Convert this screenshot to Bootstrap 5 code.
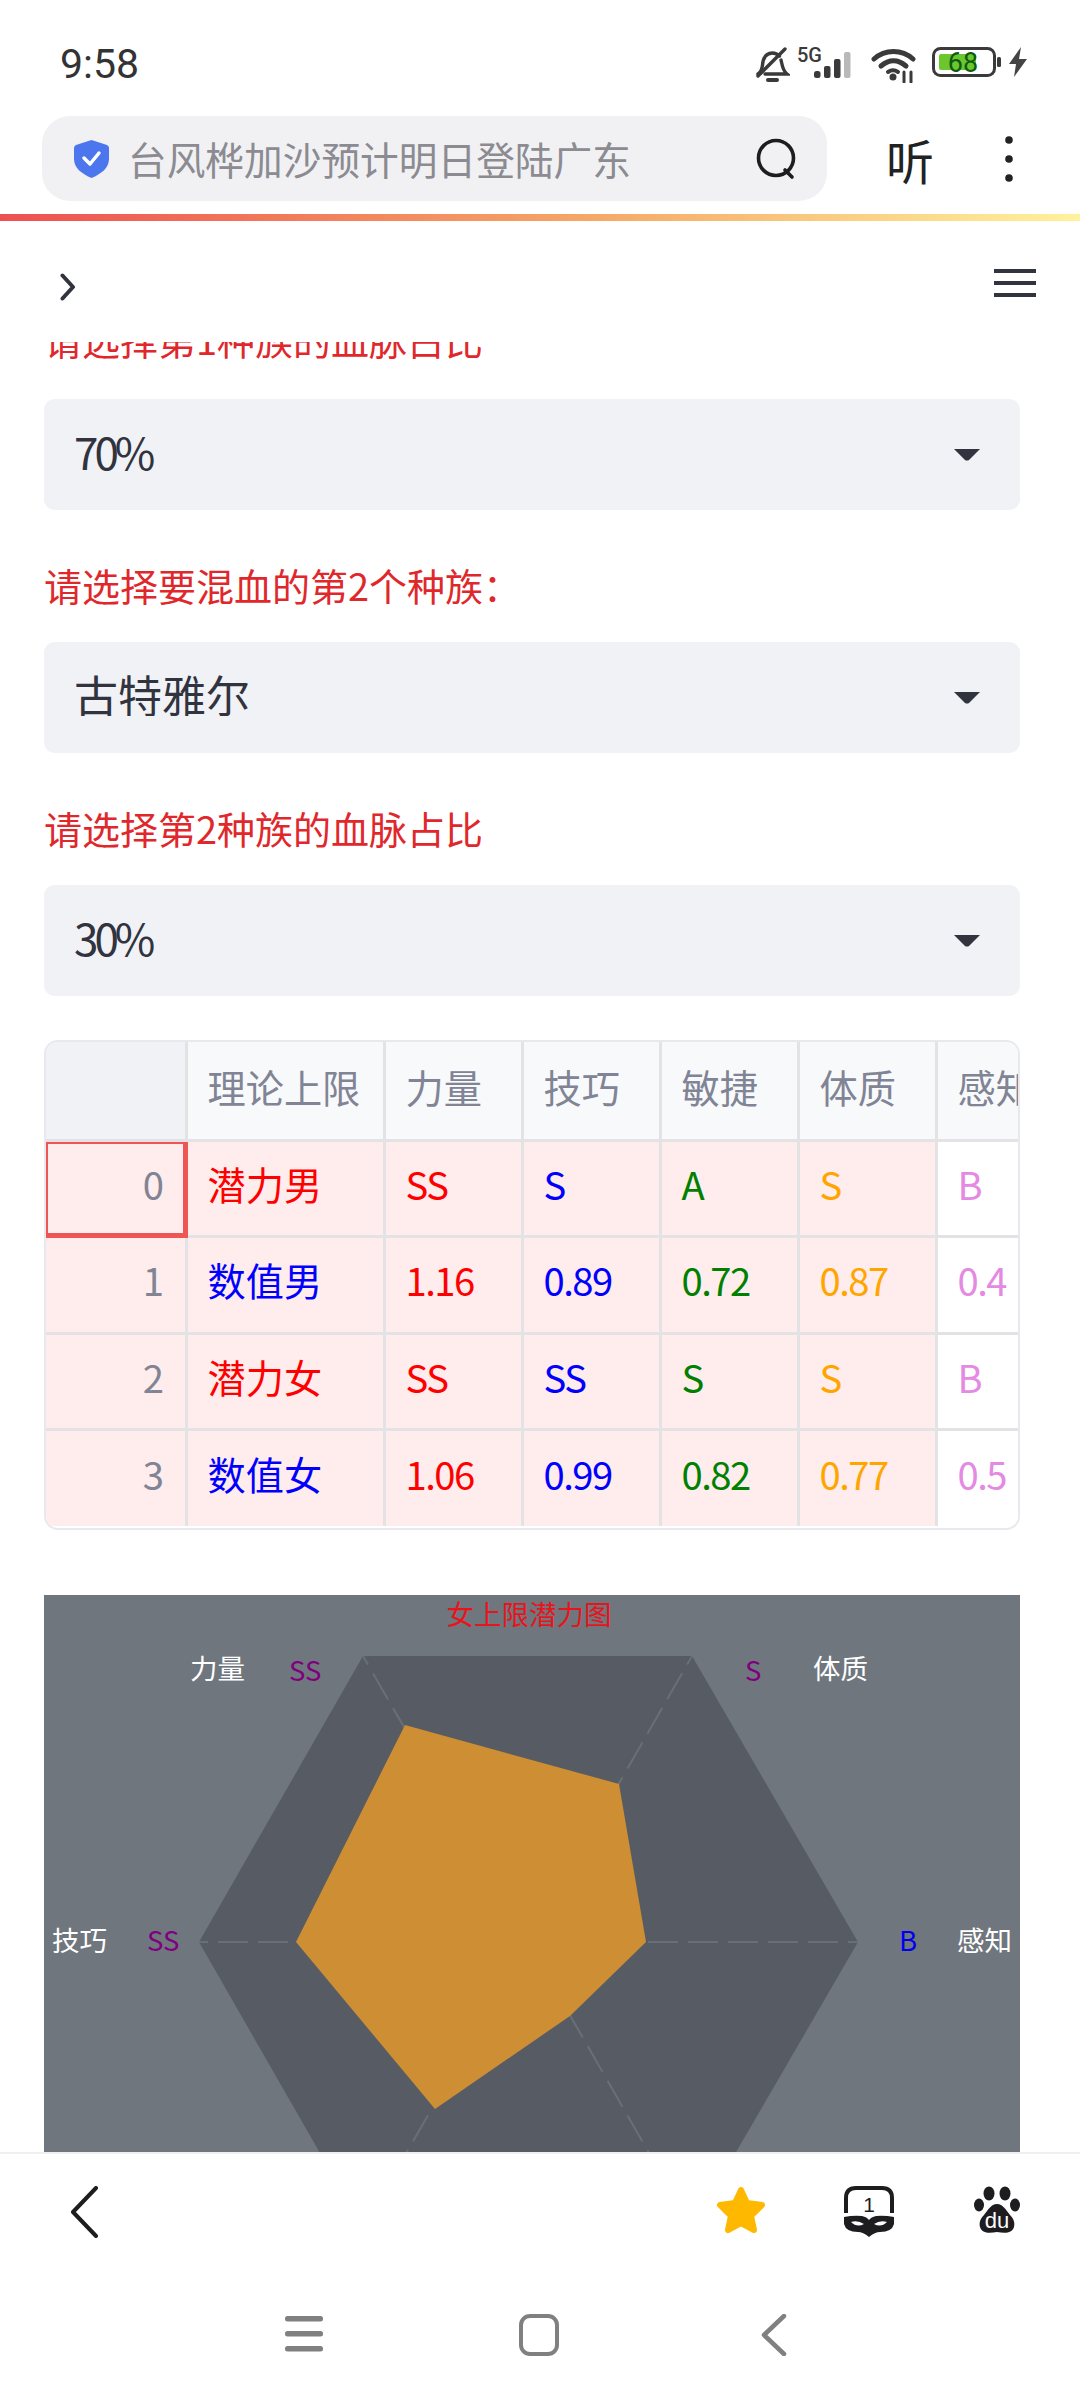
<!DOCTYPE html>
<html lang="zh-CN">
<head>
  <meta charset="UTF-8" />
  <meta name="viewport" content="width=device-width, initial-scale=1" />
  <title>血脉混血</title>
  <link href="https://cdn.jsdelivr.net/npm/bootstrap@5.3.0/dist/css/bootstrap.min.css" rel="stylesheet" />
  <style>
    html, body { height: 2400px; }
    body {
      width: 1080px;
      overflow: hidden;
      font-family: "Noto Sans CJK SC", "Liberation Sans", sans-serif;
      color: #31333f;
      background: #fff;
    }
    /* phone status bar */
    .status-row { height: 100px; padding: 47px 53px 0 60px; flex: none; }
    .clock { font-family: Roboto, sans-serif; font-size: 41px; line-height: 34px; color: #333; }
    .ic-signal { margin-left: 7px; }
    .ic-wifi { margin-left: 14px; }
    .ic-batt { margin-left: 16px; }
    .ic-bolt { margin-left: 7px; }

    /* browser address row */
    .addr-row { height: 114px; padding: 16px 0 13px 42px; flex: none; }
    .addr-box {
      width: 785px;
      height: 85px;
      background: #f1f1f4;
      border-radius: 28px;
      padding: 0 29px 0 32px;
    }
    .addr-text { font-size: 38.7px; line-height: 1; color: #8b8b91; margin-left: 19px; white-space: nowrap; }
    .listen { font-size: 48px; font-weight: 400; line-height: 1; color: #222; margin-left: 59px; }
    .more-dots { margin-left: 70px; }
    .load-bar { height: 7px; flex: none; background: linear-gradient(90deg, #ee5050, #f5a868 55%, #fff29c); }

    /* page area */
    .page-area { flex: 1 1 auto; min-height: 0; overflow: hidden; }
    .page-head { height: 121px; padding: 48px 44px 0 60px; }
    .page-body { width: 976px; margin-left: 44px; }
    .field-label { font-size: 38px; line-height: 54px; color: #e0282c; margin: 48px 0 30px; }
    .cut-label { height: 57px; overflow: hidden; }
    .cut-label .field-label { margin: -30px 0 0; }
    .pick {
      height: 111px;
      font-size: 44px;
      line-height: 1;
      color: #31333f;
      background-color: #f0f2f6;
      background-image: url("data:image/svg+xml,%3Csvg xmlns='http://www.w3.org/2000/svg' viewBox='0 0 26 12'%3E%3Cpath d='M0 0h26L15 11q-2 1-4 0z' fill='%2331333f'/%3E%3C/svg%3E");
      background-position: right 40px center;
      background-size: 26px 12px;
      border: 0;
      border-radius: 11px;
      padding: 0 80px 8px 30px;
    }
    .pick-num { letter-spacing: -4px; }

    .table-frame { margin-top: 44px; height: 490px; border: 2px solid #e8e9ee; border-radius: 14px; overflow: hidden; }
    .stat-table { table-layout: fixed; width: 1012px; margin: 0; border-collapse: collapse; font-size: 38.2px; line-height: 1; }
    .stat-table th, .stat-table td {
      height: 96.5px;
      padding: 0 0 9px 20px;
      vertical-align: middle;
      font-weight: 400;
      border: 0;
      border-right: 3px solid #e3e3e6;
      border-bottom: 3px solid #e3e3e6;
      box-shadow: none;
      white-space: nowrap;
      overflow: hidden;
    }
    .stat-table thead th { height: 98px; background: #f8f9fb; color: #808495; padding-bottom: 7px; }
    .stat-table thead th:first-child { background: #f0f2f6; }
    .stat-table td { background: #ffecec; letter-spacing: -1.5px; }
    .stat-table td.name-cell { letter-spacing: 0; }
    .stat-table td.plain-cell { background: #fff; border-right: 0; }
    .stat-table thead th:last-child { border-right: 0; }
    .stat-table td.row-idx { text-align: right; padding: 0 22px 9px 0; color: #808495; }
    .stat-table td.row-focus { box-shadow: inset 0 0 0 2px #ee5555; border-right-color: #ee5555; border-bottom-color: #ee5555; }
    .stat-table tbody tr:last-child td { border-bottom: 0; }
    .stat-table td.c-red { color: #f00; }
    .stat-table td.c-blue { color: #00f; }
    .stat-table td.c-green { color: #008000; }
    .stat-table td.c-orange { color: #ffa500; }
    .stat-table td.c-violet { color: #e58ae2; }

    .radar-wrap { margin-top: 65px; }
    .radar-wrap svg { display: block; }
    .radar-wrap text { font-family: "Noto Sans CJK SC", sans-serif; font-size: 27.5px; }

    /* browser + phone bottom bars */
    .bottom-wrap { height: 248px; flex: none; background: #fff; border-top: 2px solid #efefef; }
    .tool-row { height: 150px; padding: 32px 60px 0 70px; }
    .tool-gap { margin-left: 78px; }
    .tool-gap2 { margin-left: 80px; }
    .nav-row { padding-left: 285px; padding-top: 10px; }
    .nav-home { margin-left: 196px; }
    .nav-back { margin-left: 202px; }
  </style>
</head>
<body>
  <div class="d-flex flex-column h-100">

    <!-- status bar -->
    <div class="status-row d-flex justify-content-between align-items-start">
      <div class="clock">9:58</div>
      <div class="d-flex align-items-start">
        <svg width="35" height="37" viewBox="0 0 35 37" fill="none" stroke="#3a3a3a" stroke-width="3.4" stroke-linecap="round">
          <path d="M3 27c3-2 4-4 4.500-9 .5-6 3-12 10-12 3 0 5 1 7 3M26 13c1 3 1 10 6 14H10"/>
          <path d="M30 2 3 29"/>
          <path d="M13 33h9" stroke-width="4"/>
        </svg>
        <svg class="ic-signal" width="60" height="32" viewBox="0 0 60 32">
          <text x="0" y="15" font-family="Roboto, sans-serif" font-size="20" font-weight="500" fill="#3a3a3a">5G</text>
          <rect x="17" y="24" width="6.500" height="7" rx="2.500" fill="#3a3a3a"/>
          <rect x="27" y="19" width="6.500" height="12" rx="2" fill="#3a3a3a"/>
          <rect x="37" y="12" width="6.500" height="19" rx="2" fill="#3a3a3a"/>
          <rect x="47" y="5" width="6.500" height="26" rx="2" fill="#b9b9b9"/>
        </svg>
        <svg class="ic-wifi" width="45" height="36" viewBox="0 0 45 36" fill="none" stroke="#3a3a3a" stroke-width="5" stroke-linecap="round">
          <path d="M3 12c11-10 28-10 39 0"/>
          <path d="M10 19c8-7 17-7 25 0"/>
          <path d="M17 25c3-2 7-2 10 0" stroke-width="4"/>
          <circle cx="22" cy="30" r="3.500" fill="#3a3a3a" stroke="none"/>
          <path d="M33 25v10M40 25v10" stroke-width="3"/>
        </svg>
        <svg class="ic-batt" width="70" height="32" viewBox="0 0 70 32">
          <rect x="1.500" y="1.500" width="61" height="27" rx="7" fill="none" stroke="#3a3a3a" stroke-width="3"/>
          <rect x="7" y="7" width="37" height="16" rx="2" fill="#6cc62e"/>
          <rect x="65" y="10" width="4" height="10" rx="1.500" fill="#3a3a3a"/>
          <text x="31" y="25" text-anchor="middle" font-family="Roboto, sans-serif" font-size="27" fill="#0e5a12">68</text>
        </svg>
        <svg class="ic-bolt" width="18" height="30" viewBox="0 0 18 30">
          <path d="M12 0 0 17h7L5 30l13-18h-8z" fill="#444"/>
        </svg>
      </div>
    </div>

    <!-- address row -->
    <div class="addr-row d-flex align-items-center">
      <div class="addr-box d-flex align-items-center">
        <svg width="35" height="38" viewBox="0 0 35 38">
          <path d="M17.500 0 33 5q2 1 2 3v11c0 9-8 15-17.500 19C8 34 0 28 0 19V8q0-2 2-3z" fill="#4c76ee"/>
          <path d="M10 18l6 6 9-11" fill="none" stroke="#fff" stroke-width="3.500" stroke-linecap="round" stroke-linejoin="round"/>
        </svg>
        <span class="addr-text">台风桦加沙预计明日登陆广东</span>
        <svg class="ms-auto" width="42" height="42" viewBox="0 0 42 42" fill="none" stroke="#1d1d1f" stroke-width="3.600" stroke-linecap="round">
          <ellipse cx="20" cy="20" rx="17.500" ry="17.500"/>
          <path d="M29 32l7 7"/>
        </svg>
      </div>
      <span class="listen">听</span>
      <svg class="more-dots" width="10" height="48" viewBox="0 0 10 48" fill="#222">
        <circle cx="5" cy="5" r="3.800"/><circle cx="5" cy="24" r="3.800"/><circle cx="5" cy="43" r="3.800"/>
      </svg>
    </div>
    <div class="load-bar"></div>

    <!-- streamlit page -->
    <div class="page-area">
      <div class="page-head d-flex justify-content-between align-items-start">
        <svg class="mt-1" width="16" height="28" viewBox="0 0 16 28" fill="none" stroke="#31333f" stroke-width="4" stroke-linecap="round" stroke-linejoin="round">
          <path d="M2.500 2.500 13 14 2.500 25.500"/>
        </svg>
        <svg width="42" height="28" viewBox="0 0 42 28" fill="#31333f">
          <rect y="0" width="42" height="4"/><rect y="12" width="42" height="4"/><rect y="24" width="42" height="4"/>
        </svg>
      </div>

      <div class="page-body">
        <div class="cut-label"><div class="field-label">请选择第1种族的血脉占比</div></div>
        <select class="form-select pick pick-num"><option>70%</option></select>

        <div class="field-label">请选择要混血的第2个种族：</div>
        <select class="form-select pick"><option>古特雅尔</option></select>

        <div class="field-label">请选择第2种族的血脉占比</div>
        <select class="form-select pick pick-num"><option>30%</option></select>

        <div class="table-frame">
          <table class="table stat-table">
            <colgroup>
              <col style="width:140px"><col style="width:198px"><col style="width:138px"><col style="width:138px"><col style="width:138px"><col style="width:138px"><col style="width:122px">
            </colgroup>
            <thead>
              <tr><th></th><th>理论上限</th><th>力量</th><th>技巧</th><th>敏捷</th><th>体质</th><th>感知</th></tr>
            </thead>
            <tbody id="stat-rows"></tbody>
          </table>
        </div>

        <div class="radar-wrap">
          <svg width="976" height="700" viewBox="44 1594 976 700">
            <rect x="44" y="1594" width="976" height="700" fill="#6f767e"/>
            <polygon points="363,1655 692,1655 858,1941 692,2227 363,2227 199,1941" fill="#575c64"/>
            <g stroke="#696f77" stroke-width="2" stroke-dasharray="30 10">
              <line x1="528" y1="1941" x2="858" y2="1941"/>
              <line x1="528" y1="1941" x2="199" y2="1941"/>
              <line x1="528" y1="1941" x2="692" y2="1655"/>
              <line x1="528" y1="1941" x2="363" y2="1655"/>
              <line x1="528" y1="1941" x2="692" y2="2227"/>
              <line x1="528" y1="1941" x2="363" y2="2227"/>
            </g>
            <polygon points="405,1724 619,1783 646,1941 570,2015 435,2108 296,1941" fill="#d19033" fill-opacity="0.97"/>
            <text x="529" y="1624" text-anchor="middle" fill="#e8141c">女上限潜力图</text>
            <text x="190" y="1678" fill="#fff">力量</text>
            <text x="289" y="1680" fill="#800080">SS</text>
            <text x="813" y="1678" fill="#fff">体质</text>
            <text x="745" y="1680" fill="#800080">S</text>
            <text x="52" y="1950" fill="#fff">技巧</text>
            <text x="147" y="1950" fill="#800080">SS</text>
            <text x="957" y="1950" fill="#fff">感知</text>
            <text x="899" y="1950" fill="#0000f0">B</text>
          </svg>
        </div>
      </div>
    </div>

    <!-- bottom bars -->
    <div class="bottom-wrap">
      <div class="tool-row d-flex align-items-start">
        <svg width="30" height="52" viewBox="0 0 30 52" fill="none" stroke="#1d1d1f" stroke-width="4" stroke-linecap="round" stroke-linejoin="round">
          <path d="M26 2 3 26l23 24"/>
        </svg>
        <svg class="ms-auto" width="50" height="48" viewBox="0 0 50 48">
          <path d="M25 4 31 17 46 19 35 30 38 44 25 37 12 44 15 30 4 19 19 17z" fill="#ffb800" stroke="#ffb800" stroke-width="6" stroke-linejoin="round"/>
        </svg>
        <svg class="tool-gap" width="50" height="52" viewBox="0 0 50 52">
          <path d="M2 27V12Q2 2 12 2H38Q48 2 48 12V27" fill="none" stroke="#1d1d1f" stroke-width="4"/>
          <text x="25" y="26" text-anchor="middle" font-family="'Liberation Sans', sans-serif" font-size="21" fill="#1d1d1f">1</text>
          <path d="M0 31Q10 29 18 30 23 31 25 34 27 31 32 30 40 29 50 31V38Q48 46 36 46 31 46 25 51 19 46 14 46 2 46 0 38z" fill="#1d1d1f"/>
          <path d="M7 36q7-2 13 2-7 4-13-2zM43 36q-7-2-13 2 7 4 13-2z" fill="#fff"/>
        </svg>
        <svg class="tool-gap2" width="46" height="48" viewBox="0 0 46 48">
          <g fill="#1d1d1f">
            <ellipse cx="15" cy="7.500" rx="5.500" ry="7"/><ellipse cx="31" cy="7.500" rx="5.500" ry="7"/>
            <ellipse cx="5" cy="19" rx="5" ry="6.500"/><ellipse cx="41" cy="19" rx="5" ry="6.500"/>
            <path d="M23 18c6 0 9 6 13 11 4 4 5 8 4 12-2 7-10 6-17 5-7 1-15 2-17-5-1-4 0-8 4-12 4-5 7-11 13-11z"/>
          </g>
          <text x="23" y="42" text-anchor="middle" font-family="'Liberation Sans', sans-serif" font-size="22" fill="#fff">du</text>
        </svg>
      </div>
      <div class="nav-row d-flex align-items-start">
        <svg width="38" height="38" viewBox="0 0 38 38" fill="#808080">
          <rect y="2" width="38" height="5.500" rx="2.500"/><rect y="17" width="38" height="5.500" rx="2.500"/><rect y="32" width="38" height="5.500" rx="2.500"/>
        </svg>
        <svg class="nav-home" width="40" height="42" viewBox="0 0 40 42" fill="none" stroke="#808080" stroke-width="4">
          <rect x="2" y="2" width="36" height="38" rx="9"/>
        </svg>
        <svg class="nav-back" width="26" height="42" viewBox="0 0 26 42" fill="none" stroke="#808080" stroke-width="4.500" stroke-linecap="round" stroke-linejoin="round">
          <path d="M23 2 3 21l20 19"/>
        </svg>
      </div>
    </div>
  </div>

  <script src="https://cdn.jsdelivr.net/npm/bootstrap@5.3.0/dist/js/bootstrap.bundle.min.js"></script>
  <script>
    const colClasses = ['c-red', 'c-blue', 'c-green', 'c-orange'];
    const rows = [
      ['潜力男', 'c-red', ['SS', 'S', 'A', 'S', 'B']],
      ['数值男', 'c-blue', ['1.16', '0.89', '0.72', '0.87', '0.4']],
      ['潜力女', 'c-red', ['SS', 'SS', 'S', 'S', 'B']],
      ['数值女', 'c-blue', ['1.06', '0.99', '0.82', '0.77', '0.5']]
    ];

    document.getElementById('stat-rows').innerHTML = rows.map((r, i) => {
      const vals = r[2].map((v, j) =>
        j < 4 ? `<td class="${colClasses[j]}">${v}</td>` : `<td class="plain-cell c-violet">${v}</td>`
      ).join('');
      return `<tr><td class="row-idx ${i === 0 ? 'row-focus' : ''}">${i}</td><td class="name-cell ${r[1]}">${r[0]}</td>${vals}</tr>`;
    }).join('');
  </script>
</body>
</html>
